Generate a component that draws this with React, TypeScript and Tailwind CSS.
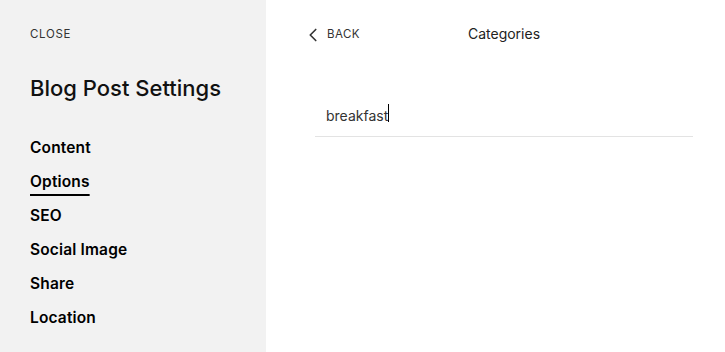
import { ChevronLeft } from "lucide-react";

const navItems = ["Content", "Options", "SEO", "Social Image", "Share", "Location"];

export default function App() {
  return (
    <div
      className="flex h-[352px] w-full overflow-hidden bg-white text-black"
      style={{ fontFamily: "Inter, 'Noto Sans', sans-serif" }}
    >
      <aside className="flex w-[266px] shrink-0 flex-col bg-[#f2f2f2] pl-[30px] pt-[27px]">
        <button
          type="button"
          className="self-start text-[11.5px] leading-[14px] tracking-[0.06em] text-[#333]"
        >
          CLOSE
        </button>
        <h1 className="mt-[34px] text-[22px] font-medium leading-[26px] text-[#111]">
          Blog Post Settings
        </h1>
        <nav className="mt-[37px] flex flex-col gap-[14px]">
          {navItems.map((item) => (
            <a
              key={item}
              className={
                item === "Options"
                  ? "self-start text-[15.5px] font-semibold leading-[20px] tracking-[0.01em] underline decoration-2 underline-offset-[7px]"
                  : "self-start text-[15.5px] font-semibold leading-[20px] tracking-[0.01em]"
              }
            >
              {item}
            </a>
          ))}
        </nav>
      </aside>

      <main className="flex min-w-0 flex-1 flex-col pl-[44px] pr-[27px] pt-[23px]">
        <header className="grid h-[20px] grid-cols-3 items-center">
          <button
            type="button"
            className="flex items-center gap-[3px] pt-[1px] text-[11.5px] tracking-[0.04em] text-[#333]"
          >
            <ChevronLeft className="-ml-[8px] h-[22px] w-[22px]" strokeWidth={1.8} />
            BACK
          </button>
          <h2 className="pb-[2px] text-center text-[14px] text-[#222]">Categories</h2>
          <div />
        </header>

        <div className="mx-[5px] mt-[61px] flex items-end border-b border-[#e3e3e3] pb-[11px] pl-[11px]">
          <span className="text-[14px] leading-[18px] text-[#333]">breakfast</span>
          <span className="mb-[3px] h-[18px] w-px bg-black" />
        </div>
      </main>
    </div>
  );
}
